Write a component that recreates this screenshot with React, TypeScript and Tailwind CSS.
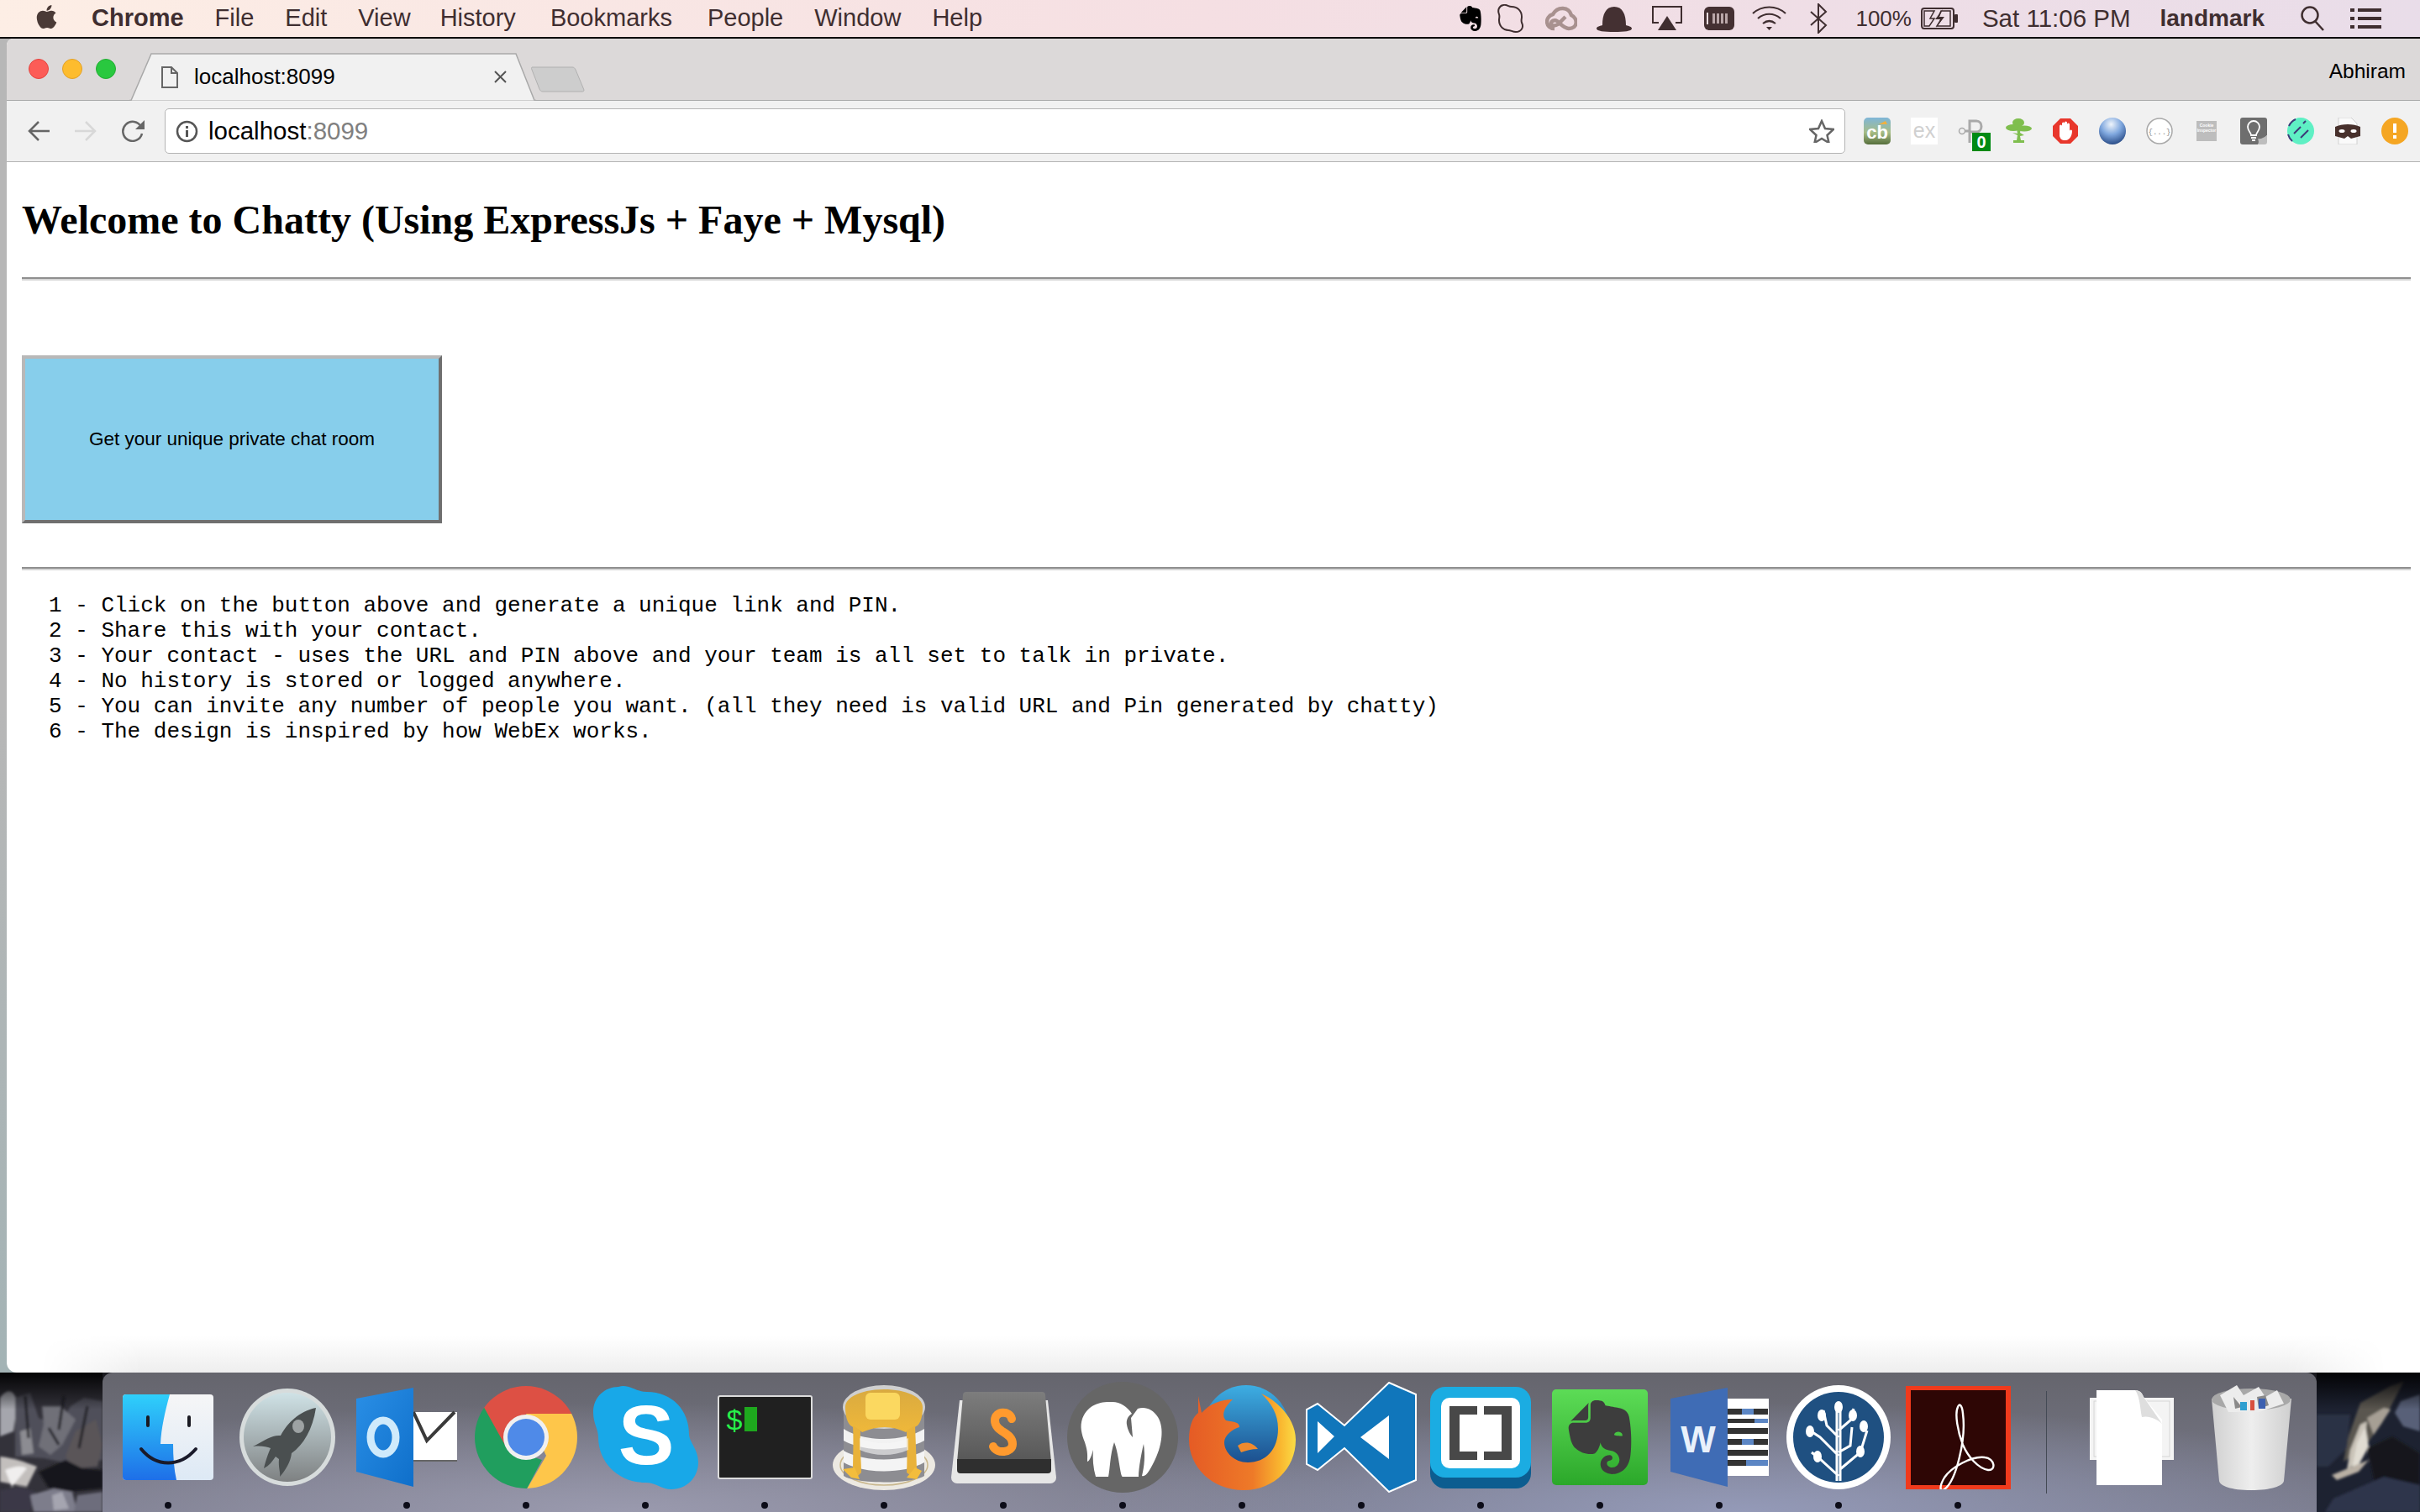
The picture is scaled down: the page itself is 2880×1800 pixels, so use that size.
import React from "react";
import { FaApple } from "react-icons/fa";
import { SiEvernote } from "react-icons/si";

const menuItems = [
  ["File", "ml-[37px]"],
  ["Edit", "ml-[37px]"],
  ["View", "ml-[37px]"],
  ["History", "ml-[35px]"],
  ["Bookmarks", "ml-[41px]"],
  ["People", "ml-[42px]"],
  ["Window", "ml-[37px]"],
  ["Help", "ml-[37px]"],
];

const steps = [
  "1 - Click on the button above and generate a unique link and PIN.",
  "2 - Share this with your contact.",
  "3 - Your contact - uses the URL and PIN above and your team is all set to talk in private.",
  "4 - No history is stored or logged anywhere.",
  "5 - You can invite any number of people you want. (all they need is valid URL and Pin generated by chatty)",
  "6 - The design is inspired by how WebEx works.",
];

function MenuRight() {
  return (
    <div className="flex items-center pr-[46px] text-[28px]">
      <SiEvernote className="w-[30px] h-[32px] text-black" />
      <svg className="ml-[17px]" width="32" height="34" viewBox="0 0 32 34" fill="none" stroke="#3f2e30" strokeWidth="2">
        <path d="M7 1c4-1 6 2 10 2 7 0 12 5 12 12 0 3-1 4 0 7 3 6-1 11-7 11-4 0-6-2-9-2C7 31 2 26 2 19c0-3 1-4 0-7C0 7 2 2 7 1z" />
      </svg>
      <svg className="ml-[25px]" width="38" height="30" viewBox="0 0 38 30" fill="none">
        <path d="M11 27C0 27-1 13 9 10 15 0 28 1 31 11c8 4 8 16-3 16-6 0-10-6-14-9-3-2-7 0-7 3 0 3 5 3 8 1l9-9" stroke="#a8918f" strokeWidth="4.500" />
      </svg>
      <svg className="ml-[23px]" width="42" height="32" viewBox="0 0 42 32">
        <path fill="#443032" d="M7 24C7 11 11 2 21 2s14 9 14 22c4 1 7 2 7 4 0 3-9 4-21 4S0 31 0 28c0-2 3-3 7-4z" />
      </svg>
      <svg className="ml-[24px]" width="36" height="30" viewBox="0 0 36 30" fill="none">
        <path d="M8 20H1V1h34v19h-7" stroke="#3f2e30" strokeWidth="2" />
        <path d="M18 12l11 17H7z" fill="#3f2e30" />
      </svg>
      <svg className="ml-[26px]" width="36" height="28" viewBox="0 0 36 28">
        <rect width="36" height="28" rx="6" fill="#443032" />
        <rect x="3" y="7" width="2" height="14" fill="#f2dfe2" />
        <path d="M10 8h3v12h-3zM15 8h3v12h-3zM20 8h3v12h-3zM25 8h3v12h-3z" fill="#b9a6a8" />
      </svg>
      <svg className="ml-[21px]" width="41" height="30" viewBox="0 0 41 30" fill="none" stroke="#3f2e30" strokeWidth="2.200">
        <path d="M1 9c11-10 28-10 39 0M7 15c8-7 19-7 27 0M13 21c5-4 10-4 15 0" />
        <path d="M17 25h7l-3.500 4z" fill="#3f2e30" stroke="none" />
      </svg>
      <svg className="ml-[28px]" width="21" height="36" viewBox="0 0 21 36" fill="none" stroke="#3f2e30" strokeWidth="2">
        <path d="M1 10l18 16-9 9V1l9 9L1 26" />
      </svg>
      <span className="ml-[33px] text-[26px]">100%</span>
      <svg className="ml-[11px]" width="44" height="26" viewBox="0 0 44 26" fill="none">
        <rect x="1" y="1" width="38" height="24" rx="3" stroke="#3f2e30" strokeWidth="2" />
        <rect x="40" y="8" width="4" height="10" rx="1" fill="#3f2e30" />
        <path d="M4 4h12l-5 9h5l-6 9H4zM24 4h11v18H19l6-9h-5z" fill="none" stroke="#3f2e30" strokeWidth="1.500" />
        <path d="M26 2l-9 12h6l-5 10 10-13h-6z" fill="#3f2e30" />
      </svg>
      <span className="ml-[29px] text-[29.500px]">Sat 11:06 PM</span>
      <span className="ml-[35px] font-bold">landmark</span>
      <svg className="ml-[43px]" width="28" height="30" viewBox="0 0 28 30" fill="none" stroke="#3f2e30" strokeWidth="2.500">
        <circle cx="11" cy="11" r="9.500" />
        <path d="M17 18l10 11" />
      </svg>
      <svg className="ml-[31px]" width="37" height="24" viewBox="0 0 37 24" fill="#3f2e30">
        <path d="M0 0h5v4H0zM9 0h28v4H9zM0 10h5v4H0zM9 10h28v4H9zM0 20h5v4H0zM9 20h28v4H9z" />
      </svg>
    </div>
  );
}

function Extensions() {
  return (
    <div className="ml-[22px] pr-[14px] flex gap-[24px] items-center">
      <svg width="32" height="32" viewBox="0 0 32 32">
        <defs>
          <linearGradient id="cb" x1="0" y1="0" x2="0" y2="1">
            <stop offset="0" stopColor="#7fb6d8" />
            <stop offset="0.55" stopColor="#a7bd86" />
            <stop offset="1" stopColor="#566f3c" />
          </linearGradient>
        </defs>
        <rect width="32" height="32" rx="5" fill="url(#cb)" />
        <path d="M18 8l8-4 2 4z" fill="#f0b040" />
        <text x="16" y="25" textAnchor="middle" fontFamily="Liberation Sans" fontWeight="700" fontSize="22" fill="#fff">cb</text>
      </svg>
      <div className="w-[32px] h-[32px] bg-white flex items-center justify-center text-[25px] text-[#d0d0d0]">ex</div>
      <div className="relative w-[32px] h-[32px]">
        <svg width="32" height="32" viewBox="0 0 32 32" fill="none" stroke="#a9a9a9" strokeWidth="3">
          <circle cx="5" cy="16" r="3.500" strokeWidth="1.500" />
          <path d="M9 16h6M14 30V4h8c8 0 8 13 0 13h-7" />
        </svg>
        <div className="absolute left-[17px] top-[18px] w-[22px] h-[22px] bg-[#008a14] text-white font-bold text-[20px] leading-[22px] text-center">0</div>
      </div>
      <svg width="32" height="32" viewBox="0 0 32 32" fill="#7fbe4e">
        <ellipse cx="16" cy="6" rx="7" ry="5" />
        <ellipse cx="10" cy="12" rx="9" ry="4" />
        <ellipse cx="23" cy="13" rx="9" ry="3.500" />
        <path d="M14 13h5l-1 5 5 3-5 1 1 5h4v3H10v-3h4l1-6-6-3 6 1z" />
      </svg>
      <svg width="32" height="32" viewBox="0 0 32 32">
        <path d="M10 1h12l9 9v12l-9 9H10l-9-9V10z" fill="#e8372c" />
        <path d="M9 16V10a1.500 1.500 0 013 0V7a1.500 1.500 0 013 0V6a1.500 1.500 0 013 0v2a1.500 1.500 0 013 0v8a1.500 1.500 0 013 0c0 4-2 11-8 11-5 0-6-2-7-5z" fill="#fff" />
      </svg>
      <svg width="32" height="32" viewBox="0 0 32 32">
        <defs>
          <radialGradient id="globe" cx="0.45" cy="0.25" r="0.85">
            <stop offset="0" stopColor="#eef4fb" />
            <stop offset="0.45" stopColor="#7fa7de" />
            <stop offset="1" stopColor="#153672" />
          </radialGradient>
        </defs>
        <circle cx="16" cy="16" r="16" fill="url(#globe)" />
      </svg>
      <svg width="32" height="32" viewBox="0 0 32 32">
        <circle cx="16" cy="16" r="15" fill="#fff" stroke="#a8a8a8" strokeWidth="1.500" />
        <text x="16" y="20" textAnchor="middle" fontFamily="Liberation Mono" fontSize="9" fill="#8a8a8a">{"{...}"}</text>
      </svg>
      <div className="w-[24px] h-[24px] mx-[4px] bg-[#bdbdbd] text-[5px] leading-[6px] text-white text-center pt-[2px] font-bold">
        Cookie Inspector
      </div>
      <svg width="32" height="32" viewBox="0 0 32 32">
        <path d="M3 0h26a3 3 0 013 3v18L21 32H3a3 3 0 01-3-3V3a3 3 0 013-3z" fill="#6e6e6e" />
        <path d="M32 21v8a3 3 0 01-3 3h-8c2-3 0-7 0-7 3 1 7-1 11-4z" fill="#bdbdbd" />
        <path d="M13 21c0-3-4-5-4-10a7 7 0 0114 0c0 5-4 7-4 10zM13 24h6M14 27h4" fill="none" stroke="#fff" strokeWidth="1.800" />
      </svg>
      <svg width="32" height="32" viewBox="0 0 32 32">
        <circle cx="16" cy="16" r="16" fill="#5ff0c4" />
        <path d="M2 10a16 16 0 018-8M1 20a16 16 0 005 8M8 19l8-8M16 24l9-9M19 7l3-3" fill="none" stroke="#3d3a78" strokeWidth="2" />
      </svg>
      <svg width="32" height="32" viewBox="0 0 32 32">
        <path d="M5 0h15l7 7v25H5z" fill="#fafafa" stroke="#d0d0d0" />
        <path d="M1 11c8-4 22-4 30 0v11l-11 3-4-3-4 3-11-3z" fill="#47302c" />
        <ellipse cx="9" cy="16" rx="3.500" ry="2" fill="#fff" />
        <ellipse cx="23" cy="16" rx="3.500" ry="2" fill="#fff" />
      </svg>
      <svg width="32" height="32" viewBox="0 0 32 32">
        <circle cx="16" cy="16" r="16" fill="#f5a623" />
        <path d="M14 7h4v11h-4zM14 21h4v4h-4z" fill="#fff" />
      </svg>
    </div>
  );
}

function Wallpaper({ side }: { side: "left" | "right" }) {
  if (side === "left") {
    return (
      <svg className="shrink-0" width="122" height="166" viewBox="0 0 122 166">
        <defs>
          <filter id="rockL">
            <feGaussianBlur stdDeviation="1.800" />
          </filter>
          <linearGradient id="topL" x1="0" y1="0" x2="0" y2="1">
            <stop offset="0" stopColor="#040405" />
            <stop offset="1" stopColor="#040405" stopOpacity="0" />
          </linearGradient>
        </defs>
        <rect width="122" height="166" fill="#33323a" />
        <g filter="url(#rockL)">
          <path d="M0 30c10-14 20-8 20 10l-4 30-16 6z" fill="#a5a6ad" />
          <path d="M18 30l18-6 10 30 24 10 14-24 16-10 22 4v70l-30 6-40-8-34-2z" fill="#4f4f5a" />
          <path d="M50 40l22 0 18 16-16 30-14 12-14-10 6-26z" fill="#6f6f78" />
          <path d="M24 70l12-4 4 30-14 2z" fill="#8c8c92" />
          <path d="M90 70l24-14 8 30-6 26-28 2-10-14z" fill="#5a5559" />
          <path d="M0 100c18 2 28 6 44 12l-12 24-32-6z" fill="#c3bfbd" />
          <path d="M6 116c10-4 20-6 26-2l-18 22z" fill="#f0eeee" />
          <path d="M46 118l32-14 20 10 24 2v22l-40 4-24-4z" fill="#19151a" />
          <path d="M0 140l24-4 18 6-6 24H0z" fill="#3a3946" />
          <path d="M36 146l28-8 22 4 6 24H40z" fill="#7d7d8b" />
          <path d="M62 146l12-4 8 20-18 2z" fill="#a5a5b0" />
          <path d="M92 146l30-4v24H88z" fill="#6d6d7c" />
          <path d="M30 28l4 50M76 28l-6 40M104 40l-10 50M58 66l12 20" stroke="#1c1c22" strokeWidth="3" fill="none" />
        </g>
        <rect width="122" height="44" fill="url(#topL)" />
      </svg>
    );
  }
  return (
    <svg className="shrink-0" width="123" height="166" viewBox="0 0 123 166">
      <defs>
        <filter id="rockR">
          <feGaussianBlur stdDeviation="1.500" />
        </filter>
        <linearGradient id="topR" x1="0" y1="0" x2="0" y2="1">
          <stop offset="0" stopColor="#030305" />
          <stop offset="1" stopColor="#030305" stopOpacity="0" />
        </linearGradient>
      </defs>
      <rect width="123" height="166" fill="#1d2231" />
      <g filter="url(#rockR)">
        <path d="M52 36l36-20 16-6-26 50-22 30-24 16 6-30z" fill="#5a5650" />
        <path d="M52 62l8-4-6 34-10 18-8 6 4-24z" fill="#c9c3b8" />
        <path d="M48 84l10-20 4 24-12 22-8 4z" fill="#e0dcd2" />
        <path d="M60 54l20-12 8 2-20 30z" fill="#a69f94" />
        <path d="M100 34l23-8v44l-20-6-10-16z" fill="#596178" />
        <path d="M0 50h40l-4 40-22 22H0z" fill="#2b3144" />
        <path d="M18 122l44-18-12 14-26 10z" fill="#b9b0a4" />
        <path d="M78 100l10 16-12-4z" fill="#cfcac2" />
        <path d="M60 90l30-14 33 20v40H70z" fill="#12151f" />
        <path d="M20 150l60-26 43 10v32H10z" fill="#2f364b" />
      </g>
      <rect width="123" height="44" fill="url(#topR)" />
    </svg>
  );
}

function Slot({ children, running }: { children: React.ReactNode; running?: boolean }) {
  return (
    <div className="w-[142px] shrink-0 flex flex-col items-center">
      <div className="h-[154px] flex items-center justify-center">{children}</div>
      {running ? <div className="w-[8px] h-[8px] rounded-full bg-[#0c0c18]" /> : null}
    </div>
  );
}

function Finder() {
  return (
    <svg width="108" height="102" viewBox="0 0 108 102">
      <defs>
        <linearGradient id="finderL" x1="0" y1="0" x2="0" y2="1">
          <stop offset="0" stopColor="#2fd0fb" />
          <stop offset="1" stopColor="#1e6fe8" />
        </linearGradient>
        <linearGradient id="finderR" x1="0" y1="0" x2="0" y2="1">
          <stop offset="0" stopColor="#f6f6f7" />
          <stop offset="1" stopColor="#dde9f5" />
        </linearGradient>
      </defs>
      <rect width="108" height="102" rx="4" fill="url(#finderR)" />
      <path d="M4 0h52C50 22 46 40 45 59h15c0 15 1 30 4 43H4a4 4 0 01-4-4V4a4 4 0 014-4z" fill="url(#finderL)" />
      <path d="M30 27v10M79 27v10" stroke="#1a1a22" strokeWidth="4" strokeLinecap="round" />
      <path d="M22 65c18 22 46 22 65 0" fill="none" stroke="#1a1a2a" strokeWidth="4" strokeLinecap="round" />
    </svg>
  );
}

function Launchpad() {
  return (
    <svg width="116" height="118" viewBox="0 0 116 118">
      <defs>
        <linearGradient id="lp" x1="0" y1="0" x2="0" y2="1">
          <stop offset="0" stopColor="#cfe2e6" />
          <stop offset="1" stopColor="#7e8182" />
        </linearGradient>
      </defs>
      <ellipse cx="58" cy="59" rx="57" ry="58" fill="#d7dcdc" />
      <ellipse cx="58" cy="59" rx="52" ry="53" fill="url(#lp)" />
      <path d="M92 24C72 28 58 42 50 57c-10-1-18 5-33 13 9-1 16 0 21 2-3 7-5 12-8 24 6-3 10-8 14-14l4 3c-1 10 2 16 1 21 7-8 13-18 14-28 14-10 25-28 29-54z" fill="#4a4f50" />
      <ellipse cx="71" cy="46" rx="7" ry="8" fill="#9da2a3" />
    </svg>
  );
}

function Outlook() {
  return (
    <svg width="120" height="118" viewBox="0 0 120 118">
      <defs>
        <linearGradient id="olk" x1="0" y1="0" x2="1" y2="1">
          <stop offset="0" stopColor="#2a8fe6" />
          <stop offset="1" stopColor="#0f6fca" />
        </linearGradient>
      </defs>
      <rect x="60" y="29" width="60" height="59" fill="#fff" />
      <path d="M68 29l16 34 33-34" fill="none" stroke="#3a3a3a" strokeWidth="4" />
      <rect x="68" y="86" width="52" height="2" fill="#666" />
      <path d="M0 13L68 0v118L0 100z" fill="url(#olk)" />
      <ellipse cx="32" cy="59" rx="15" ry="20" fill="none" stroke="#cfeafb" strokeWidth="9" />
    </svg>
  );
}

function ChromeIcon() {
  return (
    <svg width="122" height="122" viewBox="0 0 122 122">
      <defs>
        <clipPath id="chromeClip">
          <circle cx="61" cy="61" r="61" />
        </clipPath>
      </defs>
      <g clipPath="url(#chromeClip)">
        <path d="M0-5h130v38H61L38 74 8 26z" fill="#dd5044" />
        <path d="M-5 20h13l30 54 42 14-21 40H-5z" fill="#209e5e" />
        <path d="M61 33h70v95H59l26-45z" fill="#fec64a" />
      </g>
      <circle cx="61" cy="61" r="27" fill="#f0f0f0" />
      <circle cx="61" cy="61" r="22" fill="#4f8ae8" />
    </svg>
  );
}

function Skype() {
  return (
    <svg width="125" height="124" viewBox="0 0 125 124">
      <path d="M30 2c12-4 20 6 34 6 30 0 50 22 50 50 0 10 11 18 11 34 0 18-14 32-32 32-12 0-18-8-31-8-32 0-56-24-56-54 0-10-6-16-6-30C0 14 14 2 30 2z" fill="#18a8e8" />
      <text x="63" y="94" textAnchor="middle" fontFamily="Liberation Sans" fontWeight="700" fontSize="100" fill="#fff">S</text>
    </svg>
  );
}

function Terminal() {
  return (
    <div className="w-[113px] h-[100px] bg-[#202020] border-2 border-[#dcdcdc] rounded-[3px] pl-[9px] pt-[9px] flex items-start gap-[3px]">
      <span className="text-[#27f04a] text-[34px] leading-[36px]">$</span>
      <div className="w-[15px] h-[29px] bg-[#1ea81e] mt-[3px]" />
    </div>
  );
}

function Sequel() {
  return (
    <svg width="122" height="125" viewBox="0 0 122 125">
      <defs>
        <linearGradient id="syrup" x1="0" y1="0" x2="0" y2="1">
          <stop offset="0" stopColor="#d9aa40" />
          <stop offset="1" stopColor="#efb83a" />
        </linearGradient>
      </defs>
      <ellipse cx="61" cy="95" rx="61" ry="30" fill="#ece9e2" />
      <ellipse cx="61" cy="95" rx="52" ry="24" fill="none" stroke="#c9b78c" strokeWidth="1.500" />
      <path d="M13 28h96v80c-15 10-81 10-96 0z" fill="#8d8d92" />
      <path d="M13 52c25 16 71 16 96 0v14c-25 14-71 14-96 0z" fill="#f2f2f2" />
      <path d="M13 78c25 14 71 14 96 0v14c-25 14-71 14-96 0z" fill="#f4f4f4" />
      <ellipse cx="61" cy="26" rx="49" ry="26" fill="#cfcfcf" />
      <path d="M15 26c0-12 20-21 46-21s46 9 46 21c0 10-2 18-6 22-6 4-10 4-14 8-16-8-34-8-52 0-4-4-8-4-14-8-4-4-6-12-6-22z" fill="url(#syrup)" />
      <path d="M24 48l9 6c-1 20 1 36 1 50l-4 4-6-2c0-20 1-40 0-58zM88 54l10-6 2 52-4 10-8-6c1-16 0-34 0-50z" fill="#e9b23a" />
      <path d="M12 100l14-2 6 14-10-2zM88 110l10-12 8 4-6 10z" fill="#f3bd3c" />
      <path d="M32 63c18 8 40 8 58 0v14c-18 8-40 8-58 0z" fill="#f7f7f7" opacity="0.6" />
      <rect x="39" y="9" width="41" height="32" rx="6" fill="#fbd860" />
    </svg>
  );
}

function Sublime() {
  return (
    <svg width="125" height="109" viewBox="0 0 125 109">
      <defs>
        <linearGradient id="subl" x1="0" y1="0" x2="0" y2="1">
          <stop offset="0" stopColor="#7d7d7d" />
          <stop offset="1" stopColor="#555" />
        </linearGradient>
      </defs>
      <path d="M10 10h105l10 92a7 7 0 01-7 7H7a7 7 0 01-7-7z" fill="#e6e6e6" />
      <path d="M14 4a4 4 0 014-4h90a4 4 0 014 4l7 80a4 4 0 01-4 4H11a4 4 0 01-4-4z" fill="url(#subl)" />
      <path d="M7 80h112v13a4 4 0 01-4 4H11a4 4 0 01-4-4z" fill="#2f2f2f" />
      <path d="M72 32c-2-10-20-10-20 2 0 14 21 14 21 28 0 11-19 12-23 3" fill="none" stroke="#ff9a2e" strokeWidth="10" strokeLinecap="round" />
    </svg>
  );
}

function Mamp() {
  return (
    <svg width="132" height="132" viewBox="0 0 132 132">
      <ellipse cx="66" cy="66" rx="66" ry="66" fill="#666" />
      <path d="M18 44c6-16 20-21 36-20 9 0 18 6 23 14-5 3-7 8-6 13 1 7 5 13 7 15l-2-23 8-11c8-3 18 0 24 10 8 13 5 35-5 54-4 8-9 18-14 16 3-12 4-24 2-38-2 8-6 28-6 39H66c-3 0-4-26-10-41-5 14-5 33-7 41H34c-3-10-4-22-3-32-2 7-4 13-7 14 0-6 1-11-3-23-4-10-6-19-3-28z" fill="#fff" />
    </svg>
  );
}

function Firefox() {
  return (
    <svg width="127" height="125" viewBox="0 0 127 125">
      <defs>
        <linearGradient id="ffBlue" x1="0" y1="0" x2="0" y2="1">
          <stop offset="0" stopColor="#3daee3" />
          <stop offset="1" stopColor="#173f80" />
        </linearGradient>
        <linearGradient id="ffFox" x1="0" y1="0" x2="1" y2="0">
          <stop offset="0" stopColor="#e55b25" />
          <stop offset="0.6" stopColor="#ee7a28" />
          <stop offset="0.85" stopColor="#f9b52f" />
          <stop offset="1" stopColor="#fbdc45" />
        </linearGradient>
      </defs>
      <ellipse cx="68" cy="54" rx="52" ry="54" fill="url(#ffBlue)" />
      <path d="M11 13L15 33C25 22 38 17 52 17 42 26 38 36 44 42 54 44 60 44 60 50 52 52 42 60 42 68 42 80 54 92 70 92 92 92 106 76 106 52 106 34 98 22 86 10 108 20 127 42 127 65 127 100 100 125 65 125 28 125 0 98 0 65 0 50 4 38 11 33z" fill="url(#ffFox)" />
      <path d="M58 72c8-6 18-4 24 4-8 0-14 2-20 4z" fill="#ef8a2e" />
    </svg>
  );
}

function VSCode() {
  return (
    <svg width="132" height="132" viewBox="0 0 132 132">
      <path d="M99 1l32 14v102l-32 14-53-52-32 26-13-7V33l13-7 32 26z" fill="#1076bb" stroke="#fff" strokeWidth="2" />
      <path d="M99 40v52L65 66zM14 47l20 18-20 20z" fill="#fff" />
    </svg>
  );
}

function Brackets() {
  return (
    <svg width="120" height="121" viewBox="0 0 120 121">
      <rect y="14" width="120" height="107" rx="18" fill="#0c5d90" />
      <rect width="120" height="108" rx="18" fill="#1bace2" />
      <rect x="13" y="13" width="94" height="84" rx="10" fill="#fff" />
      <path d="M23 23h33v10H35v44h21v10H23zM97 23H64v10h21v44H64v10h33z" fill="#484848" />
    </svg>
  );
}

function EvernoteIcon() {
  return (
    <div className="w-[114px] h-[114px] rounded-[5px] bg-gradient-to-b from-[#5cdc56] to-[#2ba82a] flex items-center justify-center">
      <SiEvernote className="w-[88px] h-[96px] text-[#3d3d3d]" />
    </div>
  );
}

function Word() {
  return (
    <svg width="117" height="118" viewBox="0 0 117 118">
      <rect x="60" y="13" width="57" height="92" fill="#fff" />
      <path d="M68 25h48v7H68zM68 48h48v7H68zM68 37h48v5H68zM68 61h48v7H68zM68 74h48v7H68zM68 86h48v7H68z" fill="#333" />
      <path d="M85 25h14v7H85zM100 37h16v5h-16zM85 61h14v7H85zM90 86h26v7H90z" fill="#5c86c4" />
      <path d="M0 13L68 0v118L0 100z" fill="#3f6cb5" />
      <text x="33" y="77" textAnchor="middle" fontFamily="Liberation Sans" fontWeight="700" fontSize="44" fill="#e9f1fb">W</text>
    </svg>
  );
}

function Sourcetree() {
  return (
    <svg width="124" height="124" viewBox="0 0 124 124">
      <ellipse cx="62" cy="62" rx="62" ry="62" fill="#fff" />
      <ellipse cx="62" cy="62" rx="54" ry="54" fill="#1f5081" />
      <g fill="none" stroke="#fff" strokeWidth="3">
        <path d="M60 114V26M64 114V26M62 62L48 48 44 30M62 54l14-12 4-14M62 84L40 62 28 54M62 80l14-8 2-22M62 108l-22-20-10-8M64 100l24-20 8-26" />
      </g>
      <g fill="#fff">
        <ellipse cx="62" cy="26" rx="5" ry="7" />
        <ellipse cx="42" cy="36" rx="5" ry="7" />
        <ellipse cx="79" cy="36" rx="5" ry="7" />
        <ellipse cx="92" cy="49" rx="5" ry="7" />
        <ellipse cx="28" cy="55" rx="5" ry="7" />
        <ellipse cx="88" cy="79" rx="5" ry="7" />
        <ellipse cx="37" cy="85" rx="5" ry="7" />
      </g>
    </svg>
  );
}

function Acrobat() {
  return (
    <svg width="125" height="123" viewBox="0 0 125 123">
      <rect width="125" height="123" fill="#f03a1c" />
      <rect x="6" y="5" width="113" height="113" fill="#2e0605" />
      <path d="M62 25c-4 8 0 30 6 45 6 14 18 28 30 30 10 1 8-14-4-15-16-2-40 12-48 24-6 10-6 18 0 14 14-10 26-60 22-90-1-12-5-12-6-8z" fill="none" stroke="#fff" strokeWidth="2.400" />
    </svg>
  );
}

function Docs() {
  return (
    <svg width="100" height="113" viewBox="0 0 100 113">
      <rect y="9" width="100" height="74" fill="#f4f4f4" />
      <rect x="5" y="13" width="90" height="66" fill="none" stroke="#d5d5d5" />
      <path d="M8 0h46c4 0 8 2 10 8l22 27v78H8z" fill="#fff" />
      <path d="M54 0c4 0 8 2 10 8l22 32c-6-6-16-10-24-8C60 24 60 8 54 0z" fill="#dedede" />
    </svg>
  );
}

function Trash() {
  return (
    <svg width="95" height="125" viewBox="0 0 95 125">
      <defs>
        <linearGradient id="trash" x1="0" y1="0" x2="1" y2="0">
          <stop offset="0" stopColor="#d0d0d0" />
          <stop offset="0.5" stopColor="#eeeeee" />
          <stop offset="1" stopColor="#cfcfcf" />
        </linearGradient>
      </defs>
      <path d="M0 16h95l-9 98c-1 6-15 11-39 11S10 120 9 114z" fill="url(#trash)" />
      <ellipse cx="47" cy="17" rx="47" ry="13" fill="#a8a8a8" />
      <path d="M10 12L30 0l8 12L56 2l8 12 14-8 8 16-30 10H20z" fill="#ececec" />
      <path d="M26 14l10 12-8 2zM54 14l10-2 4 12-12 4z" fill="#8a8a8a" />
      <path d="M34 20h8v10h-8z" fill="#2f9fd0" />
      <path d="M56 16h8v12h-8z" fill="#3c60b0" />
      <path d="M46 18h5v12h-5z" fill="#d9503f" />
    </svg>
  );
}

export default function App() {
  return (
    <div className="w-[2880px] h-[1800px] flex flex-col overflow-hidden bg-[#1a1a1f] font-['Liberation_Sans',Arial,sans-serif]">
      <header className="h-[46px] shrink-0 border-b-2 border-[#0a0a0a] bg-gradient-to-r from-[#fdeee5] via-[#f5dfe3] to-[#e9dde9] text-[#3f2e30] text-[29px] flex items-center justify-between">
        <nav className="flex items-center pl-[42px]">
          <FaApple className="w-[27px] h-[32px] text-[#4a3a36] -mt-[4px]" />
          <span className="ml-[40px] font-bold">Chrome</span>
          {menuItems.map(([label, cls]) => (
            <span key={label} className={cls}>
              {label}
            </span>
          ))}
        </nav>
        <MenuRight />
      </header>

      <div className="flex-1 min-h-0 flex bg-gradient-to-b from-[#b7b7b7] via-[#b7b7b7] to-[#a3b3b5]">
        <div className="w-[8px] shrink-0" />
        <main className="flex-1 min-w-0 flex flex-col bg-white rounded-tl-[8px] rounded-bl-[12px] overflow-hidden">
          <div className="h-[74px] shrink-0 bg-[#dcd9d9] border-b border-[#a9a9a9] flex items-end">
            <div className="self-center flex gap-[16px] pl-[26px] pb-[2px]">
              <div className="w-[24px] h-[24px] rounded-full bg-[#fc5c57] border border-[#e5443f]" />
              <div className="w-[24px] h-[24px] rounded-full bg-[#fdbc2e] border border-[#e3a127]" />
              <div className="w-[24px] h-[24px] rounded-full bg-[#29c83f] border border-[#21ad32]" />
            </div>
            <div className="relative ml-[16px] w-[484px] h-[57px] -mb-[1px] flex items-center pl-[38px] pr-[35px]">
              <svg className="absolute inset-0" width="484" height="57" viewBox="0 0 484 57">
                <path d="M0 56.500h2L26 1h434l22 55.500h2" fill="#f1f1f1" stroke="#a9a9a9" strokeWidth="1.500" />
              </svg>
              <svg className="relative" width="20" height="26" viewBox="0 0 20 26" fill="none" stroke="#666" strokeWidth="2">
                <path d="M1 1h11l7 7v17H1zM12 1v7h7" />
              </svg>
              <span className="relative ml-[19px] text-[26px] text-black">localhost:8099</span>
              <svg className="relative ml-auto" width="15" height="15" viewBox="0 0 15 15" stroke="#555" strokeWidth="2">
                <path d="M1 1l13 13M14 1L1 14" />
              </svg>
            </div>
            <svg className="shrink-0 -ml-[6px] mb-[9px]" width="64" height="31" viewBox="0 0 64 31">
              <path d="M1 1h48c2 0 3 1 4 3l10 24c0 2-1 2-3 2H14c-2 0-3-1-4-3L1 4c-1-2 0-3 0-3z" fill="#cdcdcd" stroke="#b0b0b0" />
            </svg>
            <span className="ml-auto mr-[17px] mb-[19px] text-[24.500px] leading-[30px] text-black">Abhiram</span>
          </div>

          <div className="h-[73px] shrink-0 bg-[#f1f1f1] border-b border-[#b4b4b4] flex items-center">
            <svg className="ml-[25px]" width="26" height="24" viewBox="0 0 26 24" fill="none" stroke="#666" strokeWidth="2.500">
              <path d="M26 12H3M13 1L2 12l11 11" />
            </svg>
            <svg className="ml-[30px]" width="26" height="24" viewBox="0 0 26 24" fill="none" stroke="#d8d8d8" strokeWidth="2.500">
              <path d="M0 12h23M13 1l11 11-11 11" />
            </svg>
            <svg className="ml-[30px]" width="27" height="26" viewBox="0 0 27 26" fill="none">
              <path d="M23 8a11.500 11.500 0 10 1 8" stroke="#666" strokeWidth="2.500" />
              <path d="M27 0v11H16z" fill="#666" />
            </svg>
            <div className="ml-[24px] flex-1 h-[54px] bg-white border border-[#b4b4b4] rounded-[5px] flex items-center pl-[12px] pr-[12px]">
              <svg width="27" height="27" viewBox="0 0 27 27" fill="none" stroke="#555" strokeWidth="2.500">
                <circle cx="13.500" cy="13.500" r="11.500" />
                <path d="M13.500 12v8M13.500 7v3" strokeWidth="3" />
              </svg>
              <span className="ml-[12px] text-[29.500px] text-black">
                localhost<span className="text-[#808080]">:8099</span>
              </span>
              <svg className="ml-auto" width="30" height="28" viewBox="0 0 30 28" fill="none" stroke="#666" strokeWidth="2.500">
                <path d="M15 2l4 9 10 1-7.500 7 2 9-8.500-5-8.500 5 2-9L1 12l10-1z" />
              </svg>
            </div>
            <Extensions />
          </div>

          <div className="flex-1 min-h-0 flex flex-col pl-[18px] pr-[11px] bg-white">
            <h1 className="mt-[37px] text-[48px] leading-[64px] font-bold text-black font-['Liberation_Serif',serif]">
              Welcome to Chatty (Using ExpressJs + Faye + Mysql)
            </h1>
            <div className="mt-[36px] h-[4px] border-t-2 border-b-2 border-t-[#8f8f8f] border-b-[#d5d5d5]" />
            <button className="mt-[89px] w-[500px] h-[200px] bg-[#87ceeb] border-4 border-t-[#b8b8b8] border-l-[#b8b8b8] border-r-[#6f6f6f] border-b-[#6f6f6f] text-[22.500px] text-black">
              Get your unique private chat room
            </button>
            <div className="mt-[52px] h-[4px] border-t-2 border-b-2 border-t-[#8f8f8f] border-b-[#d5d5d5]" />
            <pre className="mt-[27px] pl-[32px] text-[26px] leading-[30px] text-black font-['Liberation_Mono',monospace]">
              {steps.join("\n")}
            </pre>
          </div>
          <div className="h-[44px] shrink-0 mx-[40px] bg-gradient-to-b from-white to-[#eeeeee] [mask-image:linear-gradient(90deg,transparent,black_120px,black_calc(100%-120px),transparent)]" />
        </main>
      </div>

      <footer className="h-[166px] shrink-0 flex">
        <Wallpaper side="left" />
        <div className="flex-1 min-w-0 flex pl-[7px] rounded-t-[12px] bg-[radial-gradient(ellipse_900px_130px_at_620px_100%,#9a9aae,transparent),radial-gradient(ellipse_800px_130px_at_1950px_100%,#949ab8,transparent),linear-gradient(180deg,#65656d,#7a7b8c)]">
          <Slot running><Finder /></Slot>
          <Slot><Launchpad /></Slot>
          <Slot running><Outlook /></Slot>
          <Slot running><ChromeIcon /></Slot>
          <Slot running><Skype /></Slot>
          <Slot running><Terminal /></Slot>
          <Slot running><Sequel /></Slot>
          <Slot running><Sublime /></Slot>
          <Slot running><Mamp /></Slot>
          <Slot running><Firefox /></Slot>
          <Slot running><VSCode /></Slot>
          <Slot running><Brackets /></Slot>
          <Slot running><EvernoteIcon /></Slot>
          <Slot running><Word /></Slot>
          <Slot running><Sourcetree /></Slot>
          <Slot running><Acrobat /></Slot>
          <div className="ml-[34px] mt-[22px] w-[1px] h-[122px] bg-[#444a55]" />
          <div className="ml-[30px]">
            <Slot><Docs /></Slot>
          </div>
          <Slot><Trash /></Slot>
        </div>
        <Wallpaper side="right" />
      </footer>
    </div>
  );
}
